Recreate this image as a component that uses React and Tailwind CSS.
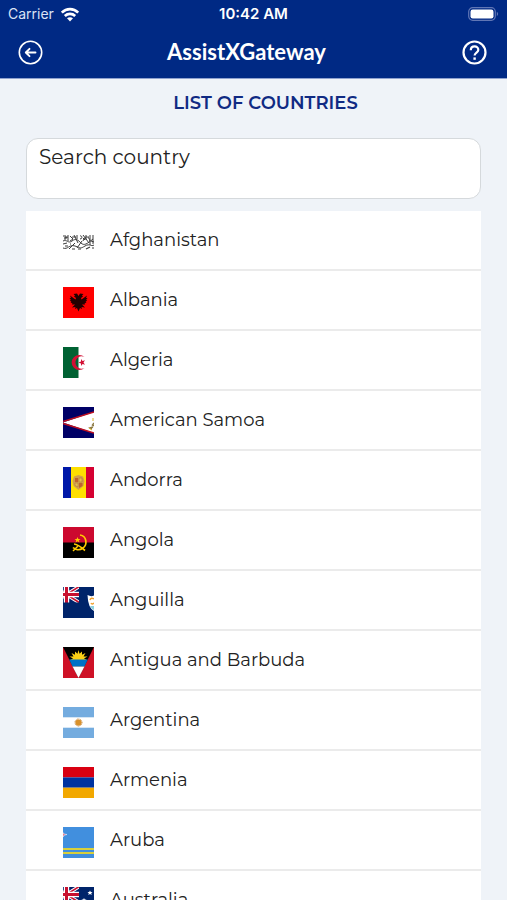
import { useState } from "react"

const FONT = "font-['Montserrat','Inter',sans-serif]"

function Flag({ children }) {
  return (
    <svg viewBox="0 0 31 31" className="h-[31px] w-[31px] shrink-0" aria-hidden="true">
      {children}
    </svg>
  )
}

function UnionJack() {
  return (
    <>
      <rect width="16" height="16" fill="#012169" />
      <path d="M-10 -1 L17 16 M17 -1 L-10 16" stroke="#fff" strokeWidth="3.6" />
      <path d="M-10 -1 L17 16 M17 -1 L-10 16" stroke="#c8102e" strokeWidth="1.6" />
      <path d="M3.5 0 V16 M0 7.5 H16" stroke="#fff" strokeWidth="5.4" />
      <path d="M3.5 0 V16 M0 7.5 H16" stroke="#c8102e" strokeWidth="3" />
      <rect x="16" width="4" height="16" fill="#00246a" />
      <rect y="15.5" width="20" height="3" fill="#00246a" />
    </>
  )
}

const COUNTRIES = [
  {
    name: "Afghanistan",
    flag: (
      <g fill="none" stroke="#3c3c3c" strokeWidth="1">
        <path d="M0 9 H3 V12 H1 M5 8 V14 M7 9 L10 12 L7 14 M11 8 L15 16 M14 8 V12 M17 9 C19 8 20 12 17 12 M20 8 L26 16 M23 8 V13 M27 8 V18 M30 8 V17" />
        <path d="M0 14 C4 12 5 17 9 14 S15 13 18 16 S24 17 30 12 M20 14 C22 8 26 9 27 14" />
        <path d="M0 17 L4 16 M0 21 C5 23 6 17 12 19 S17 22 22 19 S28 20 31 18 M6 22 L12 16 M14 21 L19 14" />
        <path d="M2 19 H5 M9 22 H12 M15 22 H18 M23 22 L27 20 M29 21 H31 M7 17 H8 M12 10 H13 M25 10 H26" strokeWidth="1.2" />
        <path d="M1 11 L5 10 M9 10 H12 M20 11 L22 13 M28 14 L31 15" />
      </g>
    ),
  },
  {
    name: "Albania",
    flag: (
      <>
        <rect width="31" height="31" fill="#f00" />
        <path
          fill="#240000"
          d="M15.5 9 L14 6.5 L10.5 7 L12 8.5 L11 9.5 L13 11 L12.5 12.5 L7 8.5 L8 11 L6.5 11 L8 13 L6.8 13.2 L8.5 15 L7.5 15.6 L9.5 16.5 L8.8 17.5 L12 17.5 L9 20.5 L12.5 20 L12 22 L14 21 L15.5 24.5 L17 21 L19 22 L18.5 20 L22 20.5 L19 17.5 L22.2 17.5 L21.5 16.5 L23.5 15.6 L22.5 15 L24.2 13.2 L23 13 L24.5 11 L23 11 L24 8.5 L18.5 12.5 L18 11 L20 9.5 L19 8.5 L20.5 7 L17 6.5 Z"
        />
      </>
    ),
  },
  {
    name: "Algeria",
    flag: (
      <>
        <rect width="31" height="31" fill="#fff" />
        <rect width="15.5" height="31" fill="#006233" />
        <path fill="#d21034" d="M21.5 10 A7.6 7.6 0 1 0 21.5 21 A6.2 6.2 0 1 1 21.5 10 Z" />
        <path fill="#d21034" d="M15.5 15.5 L18 14.6 L18 12 L19.6 14.1 L22 13.3 L20.5 15.5 L22 17.7 L19.6 16.9 L18 19 L18 16.4 Z" />
      </>
    ),
  },
  {
    name: "American Samoa",
    flag: (
      <>
        <rect width="31" height="31" fill="#000066" />
        <path d="M31 5 L0 15.5 L31 26 Z" fill="#fff" />
        <path d="M31 5 L0 14.5 M0 16.5 L31 26" stroke="#bd1021" strokeWidth="1.6" />
        <path d="M31 16 L29.5 18 L31 19 M30 20 L27 21 L29 22" fill="none" stroke="#8c7a45" strokeWidth="1.5" />
        <path d="M26 21 L29 23 M30 11 V14" stroke="#d9b32c" strokeWidth="1" />
      </>
    ),
  },
  {
    name: "Andorra",
    flag: (
      <>
        <rect width="31" height="31" fill="#fedf00" />
        <rect width="8" height="31" fill="#0018a8" />
        <rect x="23" width="8" height="31" fill="#d50032" />
        <path d="M11 9.5 L15.5 8 L20 9.5 L21.5 14 L20.5 19 L15.5 23 L10.5 19 L9.5 14 Z" fill="#d3a04a" />
        <path d="M12 11 H15 V15 H12 Z M16 16 H19.5 V19 L16 21 Z" fill="#c0632b" />
        <path d="M16 11 H19 V15 H16 Z M12 16 H15 V20 L12 18.5 Z" fill="#e8bd4d" stroke="#ab7540" strokeWidth="0.6" />
      </>
    ),
  },
  {
    name: "Angola",
    flag: (
      <>
        <rect width="31" height="31" fill="#000" />
        <rect width="31" height="15.5" fill="#cc092f" />
        <path d="M17 8 C24 9 24.5 18 20 21 C16 24 12 22.5 10 20.5" fill="none" stroke="#ffcb00" strokeWidth="1.7" />
        <path d="M11 17 C14 17 18 20 22 23.5" fill="none" stroke="#ffcb00" strokeWidth="1.7" />
        <path d="M10 24 L15 19" stroke="#ffcb00" strokeWidth="1.4" />
        <path d="M14.5 10 L15.3 12 L17.5 12 L15.8 13.3 L16.4 15.5 L14.5 14.2 L12.6 15.5 L13.2 13.3 L11.5 12 L13.7 12 Z" fill="#ffcb00" />
      </>
    ),
  },
  {
    name: "Anguilla",
    flag: (
      <>
        <rect width="31" height="31" fill="#00246a" />
        <UnionJack />
        <path d="M24.5 8 Q28 10 31 8.5 V24 Q25 21 24.5 8 Z" fill="#fff" />
        <path d="M31 19 H27 Q28.5 22 31 23 Z" fill="#8bd1df" />
        <path d="M27 13 Q28 10 31 12 M28 16 Q29 18 31 16" fill="none" stroke="#f2a12d" strokeWidth="1.5" />
      </>
    ),
  },
  {
    name: "Antigua and Barbuda",
    flag: (
      <>
        <rect width="31" height="31" fill="#ce1126" />
        <path d="M0 0 H31 L15.5 31 Z" fill="#000" />
        <path
          d="M7 13 L10 11.5 L6.5 9.5 L10.5 9.5 L8.5 6 L12 7.8 L12 4.5 L14.5 6.8 L15.5 3 L16.5 6.8 L19 4.5 L19 7.8 L22.5 6 L20.5 9.5 L24.5 9.5 L21 11.5 L24 13 Z"
          fill="#fcd116"
        />
        <path d="M6.2 12.5 H24.8 L21.5 19.5 H9.5 Z" fill="#0072c6" />
        <path d="M9.5 19.5 H21.5 L15.5 31 Z" fill="#fff" />
      </>
    ),
  },
  {
    name: "Argentina",
    flag: (
      <>
        <rect width="31" height="31" fill="#fff" />
        <rect width="31" height="10.3" fill="#74acdf" />
        <rect y="20.7" width="31" height="10.3" fill="#74acdf" />
        <circle cx="15.5" cy="15.5" r="3.1" fill="#d9912b" />
        <circle cx="15.5" cy="15.5" r="3.5" fill="none" stroke="#c98a3a" strokeWidth="1" strokeDasharray="1 0.6" />
      </>
    ),
  },
  {
    name: "Armenia",
    flag: (
      <>
        <rect width="31" height="10.4" fill="#d90012" />
        <rect y="10.4" width="31" height="10.3" fill="#0033a0" />
        <rect y="20.7" width="31" height="10.3" fill="#f2a800" />
      </>
    ),
  },
  {
    name: "Aruba",
    flag: (
      <>
        <rect width="31" height="31" fill="#418fde" />
        <path d="M0 22 H31 M0 26 H31" stroke="#d8cf3c" strokeWidth="2" />
        <path d="M0 5.5 L1 7 L4 7.5 L1 8.3 L0 10 Z" fill="#e0526b" stroke="#fff" strokeWidth="0.5" />
      </>
    ),
  },
  {
    name: "Australia",
    flag: (
      <>
        <rect width="31" height="31" fill="#00246a" />
        <UnionJack />
        <path d="M27 3.5 L27.8 5 L29.5 5 L28.2 6.2 L28.7 8 L27 7 L25.3 8 L25.8 6.2 L24.5 5 L26.2 5 Z" fill="#fff" />
        <path d="M21 11 L21.8 12.5 L23.5 12.5 L22.2 13.7 L22.7 15.5 L21 14.5 L19.3 15.5 L19.8 13.7 L18.5 12.5 L20.2 12.5 Z" fill="#fff" />
      </>
    ),
  },
]

function StatusBar() {
  return (
    <div className="grid h-7 grid-cols-3 items-center px-2 font-['Inter',sans-serif] text-white">
      <div className="flex items-center gap-[6px]">
        <span className="text-sm text-[#dbe3f5]">Carrier</span>
        <svg viewBox="0 0 20 15" className="h-[15px] w-5" fill="none" stroke="#fff" strokeWidth="2.7" aria-hidden="true">
          <path d="M1.8 5.6 C6.5 1 13.5 1 18.2 5.6" />
          <path d="M4.8 8.9 C7.8 6.1 12.2 6.1 15.2 8.9" />
          <path d="M10 14.5 L7 11.3 C8.7 9.9 11.3 9.9 13 11.3 Z" fill="#fff" stroke="none" />
        </svg>
      </div>
      <span className="text-center text-[15px] font-semibold leading-5">10:42 AM</span>
      <svg viewBox="0 0 31 14" className="h-[14px] w-[31px] justify-self-end" aria-hidden="true">
        <rect x="0.7" y="0.7" width="26.6" height="12.6" rx="4" fill="none" stroke="#6076b5" strokeWidth="1.2" />
        <rect x="2.5" y="2.5" width="23" height="9" rx="2.2" fill="#fff" />
        <path d="M28.8 4.8 Q31.5 7 28.8 9.2 Z" fill="#6076b5" />
      </svg>
    </div>
  )
}

export default function App() {
  const [query, setQuery] = useState("")
  const countries = COUNTRIES.filter((c) => c.name.toLowerCase().includes(query.trim().toLowerCase()))

  return (
    <div className={`flex h-screen flex-col overflow-hidden bg-[#eff3f8] ${FONT}`}>
      <header className="shrink-0 border-b border-[#8fa2cf] bg-[#002984]">
        <StatusBar />
        <div className="flex h-[50px] items-start justify-between pl-[18px] pr-5 pt-3">
          <button type="button" aria-label="Back">
            <svg viewBox="0 0 25 25" className="h-[25px] w-[25px]" fill="none" stroke="#fff" strokeWidth="1.6" strokeLinecap="round" strokeLinejoin="round">
              <circle cx="12.5" cy="12.5" r="11.2" />
              <path d="M17.5 12.5 H8 M11.5 8.8 L7.8 12.5 L11.5 16.2" strokeWidth="1.9" />
            </svg>
          </button>
          <h1 className="pr-3 font-['Gill_Sans','Lato',sans-serif] text-[22px] font-bold leading-6 text-white">AssistXGateway</h1>
          <button type="button" aria-label="Help">
            <svg viewBox="0 0 25 25" className="h-[25px] w-[25px]" fill="none" stroke="#fff" strokeWidth="2.2">
              <circle cx="12.5" cy="12.5" r="11" />
              <path d="M8.8 10.3 C8.8 5 16.4 5.2 16.3 10 C16.2 12.6 12.6 12.6 12.6 15.6" />
              <path d="M12.6 17.4 V19.8" strokeWidth="2.4" />
            </svg>
          </button>
        </div>
      </header>

      <main className="flex min-h-0 flex-1 flex-col px-[26px] pt-3">
        <h2 className="pl-6 text-center text-lg font-semibold leading-6 text-[#102a83]">LIST OF COUNTRIES</h2>

        <input
          type="text"
          value={query}
          onChange={(e) => setQuery(e.target.value)}
          placeholder="Search country"
          aria-label="Search country"
          className="mt-[23px] h-[61px] w-full shrink-0 rounded-xl border border-[#d5d9dc] bg-white px-3 pb-6 text-xl text-[#222] outline-none placeholder:text-[#222]"
        />

        <ul className="mt-3 min-h-0 flex-1 overflow-y-auto bg-white [scrollbar-width:none]">
          {countries.map((c) => (
            <li key={c.name} className="border-b-2 border-[#ebebeb]">
              <button type="button" className="flex h-[58px] w-full items-center gap-4 pl-[37px] pt-1 text-left">
                <Flag>{c.flag}</Flag>
                <span className="pb-1 text-lg leading-7 text-[#222]">{c.name}</span>
              </button>
            </li>
          ))}
        </ul>
      </main>
    </div>
  )
}
